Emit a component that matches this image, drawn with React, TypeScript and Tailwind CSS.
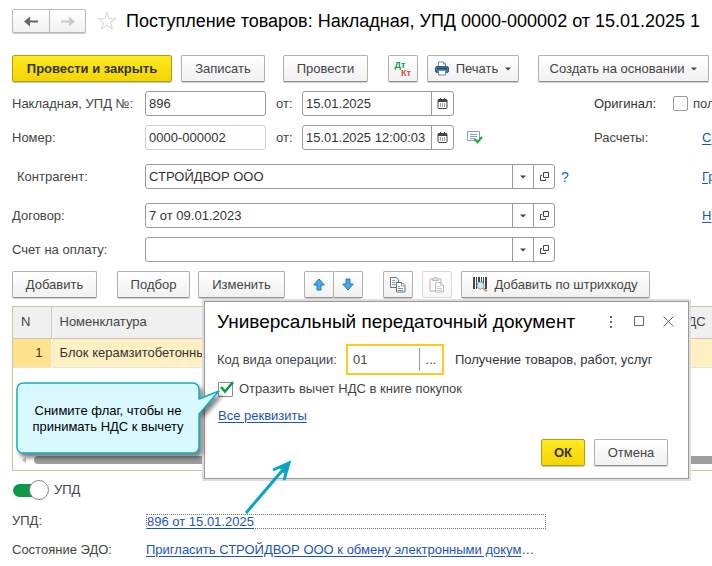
import type { ReactNode } from "react";

const BTN =
  "flex h-[27px] shrink-0 items-center justify-center rounded-[2px] border border-[#b0b0b0] border-b-[#8f8f8f] bg-linear-to-b from-white to-[#f1f1f1] shadow-[0_1px_0_#d0d0d0] whitespace-nowrap";
const YELLOW =
  "flex h-[27px] shrink-0 items-center justify-center rounded-[2px] border border-[#b39d10] bg-linear-to-b from-[#ffe81f] to-[#f3d500] font-bold text-[#333333] shadow-[0_1px_0_#c8c8c8] whitespace-nowrap";
const BOX = "flex h-[25px] shrink-0 overflow-hidden rounded-[3px] border border-[#9a9a9a] bg-white";
const FIELD = "h-full w-full min-w-0 bg-transparent px-[3px] text-[13px] text-[#333333] outline-none";
const LINK = "text-[#1b55b5] underline underline-offset-2";

function Button({ width, children }: { width: string; children: ReactNode }) {
  return (
    <button type="button" className={`${BTN} ${width}`}>
      {children}
    </button>
  );
}

function Caret() {
  return (
    <svg width="6" height="4" viewBox="0 0 6 4" aria-hidden="true">
      <path d="M0 0.5h6L3 3.5z" fill="#444" />
    </svg>
  );
}

function CalendarIcon() {
  return (
    <svg width="11" height="11" viewBox="0 0 11 11" aria-hidden="true">
      <rect x="1" y="1.5" width="9" height="9" rx="1" fill="none" stroke="#444" />
      <path d="M1 1.5h9v2.5h-9zM3 0h1v2H3zM7 0h1v2H7z" fill="#444" />
      <path d="M3 6h1M5 6h1M7 6h1M3 8h1M5 8h1M7 8h1" stroke="#444" />
    </svg>
  );
}

function OpenIcon() {
  return (
    <svg width="9" height="9" viewBox="0 0 9 9" fill="none" stroke="#444" aria-hidden="true">
      <path d="M3.500 0.500h5v5h-5z" />
      <path d="M2 3.500h-1.500v5h5v-1.500" />
    </svg>
  );
}

function DateField({ id, value }: { id: string; value: string }) {
  return (
    <div className={`${BOX} w-[152px]`}>
      <input id={id} defaultValue={value} className={FIELD} />
      <button type="button" aria-label="Календарь" className="flex w-[22px] shrink-0 items-center justify-center border-l border-[#9a9a9a]">
        <CalendarIcon />
      </button>
    </div>
  );
}

function ComboRow({ id, label, value, inset, help, side, gap }: { id: string; label: string; value: string; inset?: boolean; help?: boolean; side?: string; gap: string }) {
  return (
    <div className={`flex items-center ${gap}`}>
      <div className="flex w-[582px] shrink-0 items-center">
        <label htmlFor={id} className={`w-[133px] shrink-0 ${inset ? "pl-[5px]" : ""}`}>
          {label}
        </label>
        <div className={`${BOX} w-[410px]`}>
          <input id={id} defaultValue={value} className={FIELD} />
          <button type="button" aria-label="Выбрать" className="flex w-[21px] shrink-0 items-center justify-center border-l border-[#9a9a9a]">
            <Caret />
          </button>
          <button type="button" aria-label="Открыть" className="flex w-[21px] shrink-0 items-center justify-center border-l border-[#9a9a9a]">
            <OpenIcon />
          </button>
        </div>
        {help && (
          <button type="button" className="ml-[6px] text-[14px] text-[#0a70c8]">
            ?
          </button>
        )}
      </div>
      {side && (
        <a href="#" className={`ml-[108px] ${LINK}`}>
          {side}
        </a>
      )}
    </div>
  );
}

function NavArrow({ color, flip }: { color: string; flip?: boolean }) {
  return (
    <svg width="14" height="11" viewBox="0 0 14 11" aria-hidden="true">
      <path d={flip ? "M0 4.500h8V0.500L14 5.500L8 10.500V6.500H0z" : "M14 4.500H6V0.500L0 5.500L6 10.500V6.500H14z"} fill={color} />
    </svg>
  );
}

function BlueArrow({ down }: { down?: boolean }) {
  return (
    <svg width="12" height="13" viewBox="0 0 12 13" aria-hidden="true">
      <path
        d={down ? "M4 1h4v5h3.300L6 12L0.700 6H4z" : "M4 12h4V7h3.300L6 1L0.700 7H4z"}
        fill="#3eabf0"
        stroke="#2779ae"
      />
    </svg>
  );
}

function PrinterIcon() {
  return (
    <svg width="14" height="15" viewBox="0 0 14 15" aria-hidden="true">
      <path d="M3.500 6V1h5l2 2v3" fill="#fff" stroke="#6b8ba4" />
      <path d="M8.500 1v2h2" fill="none" stroke="#6b8ba4" />
      <rect x="0.500" y="5.500" width="13" height="6" rx="1.500" fill="#41779f" stroke="#2f5f85" />
      <path d="M2 7.500h10" stroke="#23415c" />
      <path d="M3.500 9.500h7v4.500h-7z" fill="#fff" stroke="#6b8ba4" />
    </svg>
  );
}

function CopyIcon() {
  return (
    <svg width="16" height="16" viewBox="0 0 16 16" fill="#fff" stroke="#5f7586" aria-hidden="true">
      <path d="M0.500 0.500h6l2 2.500v7.500h-8z" />
      <path d="M2 3.500h3M2 5.500h4M2 7.500h4" stroke="#9fb0bc" />
      <path d="M6.500 5.500h5.500l3 3v6.500h-8.500z" />
      <path d="M11.500 5.500v3.500h3.500M8 9.500h2M8 11.500h5M8 13.500h5" fill="none" stroke="#8499a8" />
    </svg>
  );
}

function PasteIcon() {
  return (
    <svg width="16" height="16" viewBox="0 0 16 16" fill="#fff" aria-hidden="true">
      <rect x="1" y="2" width="11" height="12" rx="1" stroke="#e3c4ad" strokeWidth="1.500" />
      <path d="M3.500 3.500V2l2-1.500h2L9.500 2v1.500z" fill="#ddd" stroke="#bdbdbd" />
      <path d="M6.500 5.500h5l3 3v6.500h-8z" stroke="#b9bec3" />
      <path d="M11.500 5.500v3h3M8 9.500h2M8 11.500h5M8 13.500h5" fill="none" stroke="#c5cacf" />
    </svg>
  );
}

function BarcodeIcon() {
  return (
    <svg width="15" height="15" viewBox="0 0 15 15" aria-hidden="true">
      <path d="M0 0h2v12H0zM3 0h1v12H3zM5 0h2v9H5zM8 0h1v7H8zM10 0h1v7h-1zM12 0h2v12h-2z" fill="#444" />
      <path d="M10 11l4 3.500" stroke="#c59a72" strokeWidth="2" />
      <circle cx="7.500" cy="8.500" r="3.500" fill="#cdeafa" stroke="#7fa9c4" />
    </svg>
  );
}

function PostedIcon() {
  return (
    <svg width="16" height="13" viewBox="0 0 16 13" aria-hidden="true">
      <path d="M0.500 0.500h12v9h-12z" fill="#fff" stroke="#8aa0b0" />
      <path d="M3 3.500h7M3 5.500h7M3 7.500h5" stroke="#8aa0b0" />
      <path d="M7.500 8l3 3.200L15 6" fill="none" stroke="#1fae3b" strokeWidth="2.200" />
    </svg>
  );
}

function Dialog() {
  return (
    <section
      role="dialog"
      aria-label="Универсальный передаточный документ"
      className="absolute top-[301px] left-[204px] flex h-[178px] w-[485px] flex-col border border-[#999999] bg-white pr-5 pl-3 shadow-[0_0_0_2px_#dedede]"
    >
      <header className="flex h-[39px] shrink-0 items-center">
        <h2 className="flex-1 text-[19px] whitespace-nowrap text-black">Универсальный передаточный документ</h2>
        <div className="-mr-2 flex items-center gap-[18px]">
          <button type="button" aria-label="Меню">
            <svg width="4" height="12" viewBox="0 0 4 12" fill="#666">
              <path d="M1 0h2v2H1zM1 5h2v2H1zM1 10h2v2H1z" />
            </svg>
          </button>
          <button type="button" aria-label="Развернуть" className="ml-[3px]">
            <svg width="11" height="11" viewBox="0 0 11 11">
              <path d="M0.500 0.500h9v9h-9z" fill="none" stroke="#666" />
            </svg>
          </button>
          <button type="button" aria-label="Закрыть" className="mr-[2px]">
            <svg width="11" height="11" viewBox="0 0 11 11">
              <path d="M0.500 0.500l10 10M10.500 0.500l-10 10" stroke="#666" />
            </svg>
          </button>
        </div>
      </header>
      <div className="mt-[3px] flex h-[31px] shrink-0 items-center">
        <label htmlFor="op" className="w-[129px] shrink-0">
          Код вида операции:
        </label>
        <div className="flex h-full w-[98px] shrink-0 items-center border-2 border-[#fcc91c]">
          <input id="op" defaultValue="01" className="h-full w-[71px] px-[5px] text-[13px] text-[#4a4a4a] outline-none" />
          <button type="button" className="h-[23px] flex-1 border-l border-[#9a9a9a]">
            ...
          </button>
        </div>
        <span className="ml-[11px] whitespace-nowrap text-[#333333]">Получение товаров, работ, услуг</span>
      </div>
      <label className="mt-[5px] ml-px flex h-[18px] items-center gap-[6px]">
        <span className="relative flex size-[15px]">
          <input type="checkbox" defaultChecked className="peer size-[15px] appearance-none rounded-[1px] border border-[#8c8c8c] bg-white" />
          <svg className="pointer-events-none absolute -top-px left-[2px] hidden peer-checked:block" width="14" height="13" viewBox="0 0 14 13">
            <path d="M1 6l4 4.500L13 1" fill="none" stroke="#0c9a48" strokeWidth="2.600" />
          </svg>
        </span>
        Отразить вычет НДС в книге покупок
      </label>
      <div className="mt-[9px] ml-px h-[18px] leading-[18px]">
        <a href="#" className={LINK}>
          Все реквизиты
        </a>
      </div>
      <div className="mt-[14px] flex justify-end gap-[9px]">
        <button type="button" className={`${YELLOW} w-[44px]`}>
          ОК
        </button>
        <Button width="w-[74px]">Отмена</Button>
      </div>
    </section>
  );
}

export default function App() {
  return (
    <main className="relative overflow-hidden bg-white pt-[9px] pb-[6px] pl-3 font-['Liberation_Sans',Arial,sans-serif] text-[13px] leading-[18px] text-[#444444]">
      <header className="flex items-center">
        <div className="flex h-[24px] shrink-0 rounded-[2px] border border-[#b8b8b8] bg-linear-to-b from-white to-[#f1f1f1] shadow-[0_1px_0_#c8c8c8]">
          <button type="button" aria-label="Назад" className="flex w-[37px] items-center justify-center border-r border-[#b8b8b8]">
            <NavArrow color="#666666" />
          </button>
          <button type="button" aria-label="Вперед" className="flex w-[35px] items-center justify-center">
            <NavArrow color="#cccccc" flip />
          </button>
        </div>
        <button type="button" aria-label="В избранное" className="ml-[11px]">
          <svg width="20" height="20" viewBox="0 0 20 20">
            <path d="M10 1.500l2.200 6.200h6.400l-5.100 3.900 2 6.400-5.500-3.900-5.500 3.900 2-6.400L1.400 7.700h6.400z" fill="#fff" stroke="#d2d2d2" />
          </svg>
        </button>
        <h1 className="ml-[9px] text-[18px] whitespace-nowrap text-black">Поступление товаров: Накладная, УПД 0000-000002 от 15.01.2025 1</h1>
      </header>

      <div className="mt-[22px] flex items-center">
        <button type="button" className={`${YELLOW} w-[160px]`}>
          Провести и закрыть
        </button>
        <div className="ml-[9px] flex">
          <Button width="w-[84px]">Записать</Button>
        </div>
        <div className="ml-[18px] flex">
          <Button width="w-[85px]">Провести</Button>
        </div>
        <div className="ml-5 flex gap-[9px]">
          <Button width="w-[30px]">
            <span className="flex flex-col text-[9px] leading-[8px] font-bold">
              <span className="pr-[6px] text-[#0c9a48]">Дт</span>
              <span className="pl-[6px] text-[#e04a4a]">Кт</span>
            </span>
          </Button>
          <Button width="w-[92px]">
            <PrinterIcon />
            <span className="mr-[7px] ml-[7px]">Печать</span>
            <Caret />
          </Button>
        </div>
        <div className="ml-[19px] flex">
          <Button width="w-[171px]">
            <span className="mr-[7px]">Создать на основании</span>
            <Caret />
          </Button>
        </div>
      </div>

      <div className="mt-[9px] flex items-center">
        <div className="flex w-[582px] shrink-0 items-center">
          <label htmlFor="invoice" className="w-[133px] shrink-0 whitespace-nowrap">
            Накладная, УПД №:
          </label>
          <div className={`${BOX} w-[121px]`}>
            <input id="invoice" defaultValue="896" className={FIELD} />
          </div>
          <label htmlFor="invoice-date" className="ml-[10px] w-[26px]">
            от:
          </label>
          <DateField id="invoice-date" value="15.01.2025" />
        </div>
        <span className="w-[79px] shrink-0 text-[#333333]">Оригинал:</span>
        <label className="flex items-center gap-[5px] whitespace-nowrap">
          <input type="checkbox" className="size-[15px] shrink-0 appearance-none rounded-[2px] border border-[#9a9a9a] bg-white" />
          пол
        </label>
      </div>

      <div className="mt-[9px] flex items-center">
        <div className="flex w-[582px] shrink-0 items-center">
          <label htmlFor="number" className="w-[133px] shrink-0">
            Номер:
          </label>
          <div className="flex h-[25px] w-[121px] rounded-[3px] border border-[#cfcfcf]">
            <input id="number" defaultValue="0000-000002" className={FIELD} />
          </div>
          <label htmlFor="number-date" className="ml-[10px] w-[26px]">
            от:
          </label>
          <DateField id="number-date" value="15.01.2025 12:00:03" />
          <span className="ml-[13px]">
            <PostedIcon />
          </span>
        </div>
        <span className="w-[108px] shrink-0">Расчеты:</span>
        <a href="#" className={LINK}>
          С
        </a>
      </div>

      <ComboRow id="partner" label="Контрагент:" value="СТРОЙДВОР ООО" inset help side="Гр" gap="mt-[14px]" />
      <ComboRow id="contract" label="Договор:" value="7 от 09.01.2023" side="Н" gap="mt-[14px]" />
      <ComboRow id="bill" label="Счет на оплату:" value="" gap="mt-[9px]" />

      <div className="mt-[9px] flex items-center">
        <Button width="w-[85px]">Добавить</Button>
        <div className="ml-5 flex gap-2">
          <Button width="w-[73px]">Подбор</Button>
          <Button width="w-[87px]">Изменить</Button>
        </div>
        <div className="ml-[19px] flex">
          <Button width="w-[30px]">
            <BlueArrow />
          </Button>
          <div className="-ml-px flex">
            <Button width="w-[30px]">
              <BlueArrow down />
            </Button>
          </div>
        </div>
        <div className="ml-5 flex gap-[9px]">
          <Button width="w-[30px]">
            <CopyIcon />
          </Button>
          <button type="button" disabled className="flex h-[27px] w-[30px] items-center justify-center rounded-[2px] border border-[#d8d8d8] bg-linear-to-b from-white to-[#f6f6f6]">
            <PasteIcon />
          </button>
          <Button width="w-[189px]">
            <BarcodeIcon />
            <span className="ml-[6px]">Добавить по штрихкоду</span>
          </Button>
        </div>
      </div>

      <div className="mt-2 h-[165px] overflow-hidden border border-r-0 border-[#c9c6a4]">
        <table className="w-full table-fixed border-collapse text-left text-[#444444]">
          <colgroup>
            <col className="w-[38px]" />
            <col />
            <col className="w-[42px]" />
          </colgroup>
          <thead>
            <tr className="h-[31px] border-b border-[#c8c8c8] bg-[#f0f0f0]">
              <th className="border-r border-[#c8c8c8] pl-2 font-normal">N</th>
              <th className="pl-2 font-normal">Номенклатура</th>
              <th className="pl-2 font-normal">НДС</th>
            </tr>
          </thead>
          <tbody>
            <tr className="h-[29px] border-b border-[#e4e4e4] bg-[#fff0c4] text-[#333333]">
              <td className="border-r border-white bg-[#ffe38c] pr-2 text-right">1</td>
              <td className="truncate pl-2">Блок керамзитобетонный</td>
              <td />
            </tr>
          </tbody>
        </table>
        <div className="mt-[88px] flex h-2 items-center gap-2 pl-[9px]">
          <svg width="4" height="6" viewBox="0 0 4 6">
            <path d="M4 0v6L0 3z" fill="#bdbdbd" />
          </svg>
          <div className="h-2 flex-1 rounded-l-[4px] bg-[#9d9d9d]" />
        </div>
      </div>

      <label className="mt-[9px] flex h-5 items-center">
        <span className="relative flex h-5 w-[37px] items-center pl-px">
          <input type="checkbox" defaultChecked className="peer h-[13px] w-[30px] appearance-none rounded-full bg-[#b0b0b0] checked:bg-[#0c9a48]" />
          <span className="pointer-events-none absolute top-0 right-0 size-5 rounded-full border border-[#888888] bg-white" />
        </span>
        <span className="ml-[5px]">УПД</span>
      </label>

      <div className="mt-[12px] flex h-[18px] items-center">
        <span className="w-[134px] shrink-0">УПД:</span>
        <div className="h-[15px] w-[400px] border border-dotted border-[#777777] leading-[13px]">
          <a href="#" className={LINK}>
            896 от 15.01.2025
          </a>
        </div>
      </div>
      <div className="mt-[11px] flex h-[18px] items-center">
        <span className="w-[134px] shrink-0 whitespace-nowrap">Состояние ЭДО:</span>
        <a href="#" className={`w-[394px] truncate ${LINK}`}>
          Пригласить СТРОЙДВОР ООО к обмену электронными документами
        </a>
      </div>

      <Dialog />

      <div className="absolute top-[375px] left-[10px] h-[90px] w-[220px]">
        <svg className="absolute inset-0" width="220" height="90" viewBox="0 0 220 90" aria-hidden="true">
          <path
            d="M13 8H183a6 6 0 0 1 6 6V24L209 16L189 39V72a6 6 0 0 1-6 6H13a6 6 0 0 1-6-6V14a6 6 0 0 1 6-6z"
            fill="#d9f9ff"
            stroke="#0cb0c0"
            strokeWidth="1.500"
            strokeLinejoin="round"
            className="drop-shadow-[3px_4px_2px_rgba(0,0,0,0.5)]"
          />
        </svg>
        <p className="absolute top-[28px] left-[8px] w-[180px] text-center text-[13px] leading-[16px] text-black">
          Снимите флаг, чтобы не
          <br />
          принимать НДС к вычету
        </p>
      </div>

      <svg className="pointer-events-none absolute top-[455px] left-[242px]" width="52" height="62" viewBox="0 0 52 62" fill="none" stroke="#08a5c5" strokeWidth="3" aria-hidden="true">
        <path d="M4 58L45 10" />
        <path d="M31 15L47 8L42 25" strokeWidth="3" />
        <path d="M47 8L38 13L42 18z" fill="#08a5c5" strokeWidth="1" />
      </svg>
    </main>
  );
}
